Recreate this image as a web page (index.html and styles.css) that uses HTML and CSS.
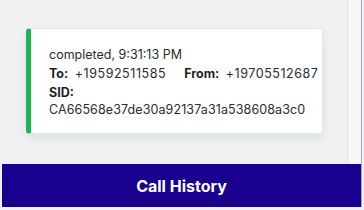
FILE: index.html
```html
<!DOCTYPE html>
<html lang="en">
<head>
    <meta charset="UTF-8">
    <meta name="viewport" content="width=device-width, initial-scale=1.0">
    <title>Call History</title>
    <link rel="stylesheet" href="styles.css">
</head>
<body>
    <div class="frame">
        <div class="main">
            <div class="content">
                <div class="call-card">
                    <div class="call-status">completed, 9:31:13 PM</div>
                    <div class="call-row">
                        <span class="field"><b>To:</b> <span class="phone">+19592511585</span></span>
                        <span class="field"><b>From:</b> <span class="phone">+19705512687</span></span>
                    </div>
                    <div class="call-sid">
                        <b>SID:</b>
                        <div class="sid-value">CA66568e37de30a92137a31a538608a3c0</div>
                    </div>
                </div>
            </div>
            <div class="side"></div>
        </div>
        <div class="bottom-bar">Call History</div>
    </div>
</body>
</html>
```

FILE: styles.css
```css
body {
    margin: 0;
    padding: 0;
    background-color: #f1f1f3;
    font-family: Inter, "Noto Sans", sans-serif;
    color: #2b2b30;
}
.frame {
    display: flex;
    flex-direction: column;
    width: 359px;
    height: 207px;
    margin-left: 2px;
    border-right: 1px solid #a9a9c0;
}
.main {
    flex: 1;
    display: flex;
}
.content {
    flex: 1;
    min-width: 0;
    padding: 28px 24px 0 24px;
}
.side {
    width: 13px;
    border-left: 1px solid #e2e2e6;
    background-color: #f6f6f8;
}
.call-card {
    background-color: #ffffff;
    border: 1px solid #d6efe2;
    border-left: 5px solid #1bb554;
    border-radius: 4px;
    box-shadow: 0 4px 10px rgba(0, 0, 0, 0.08);
    padding: 16px 4px 15px 18px;
    font-size: 12.5px;
    line-height: 19px;
}
.call-row {
    display: flex;
    gap: 18px;
    white-space: nowrap;
}
.call-row b,
.call-sid b {
    color: #1f1f24;
    margin-right: 3px;
}
.phone {
    letter-spacing: 0.55px;
}
.call-sid {
    line-height: 17px;
    margin-top: 1px;
}
.sid-value {
    letter-spacing: 0.1px;
    white-space: nowrap;
}
.bottom-bar {
    height: 43px;
    background-color: #19008e;
    color: #ffffff;
    font-weight: 700;
    font-size: 16px;
    display: flex;
    align-items: center;
    justify-content: center;
}
```
